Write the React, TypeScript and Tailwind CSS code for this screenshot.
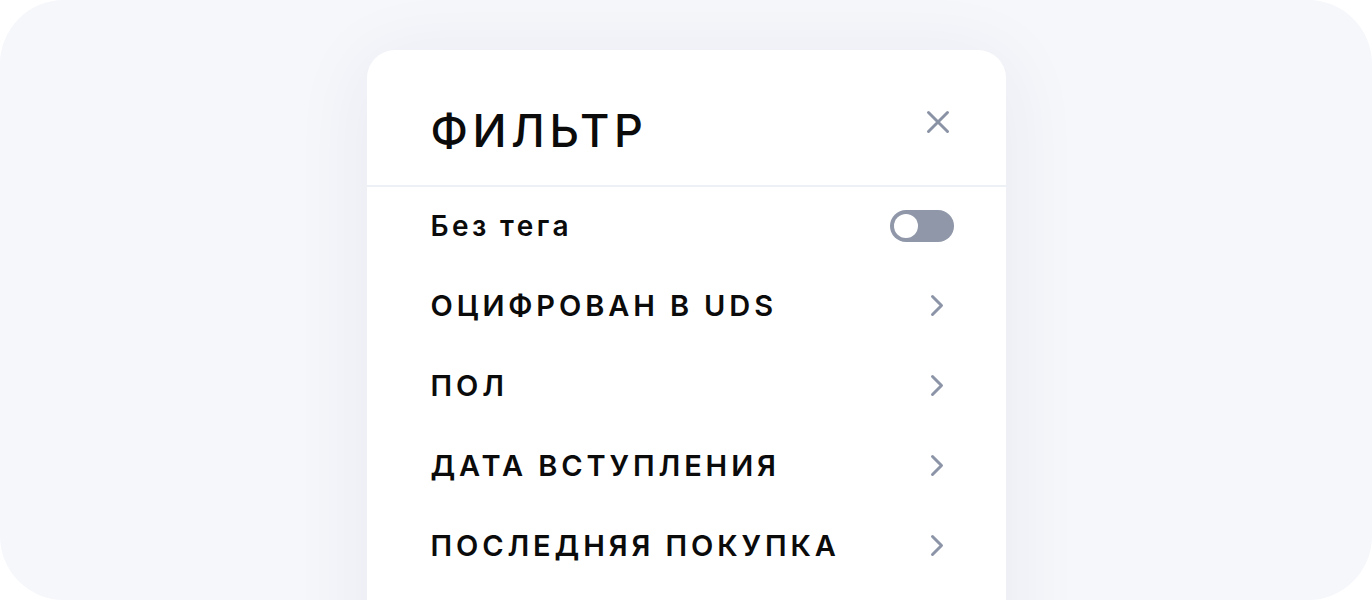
import { useState } from 'react'

const rows = ['ОЦИФРОВАН В UDS', 'ПОЛ', 'ДАТА ВСТУПЛЕНИЯ', 'ПОСЛЕДНЯЯ ПОКУПКА']

function Chevron() {
  return (
    <svg width="14" height="23" viewBox="0 0 14 23" fill="none" className="shrink-0">
      <path d="M2.5 2.5 L11.5 11.5 L2.5 20.5" stroke="#8c95a8" strokeWidth="3" strokeLinecap="round" strokeLinejoin="round" />
    </svg>
  )
}

export default function App() {
  const [noTag, setNoTag] = useState(false)

  return (
    <div className="bg-white font-['Inter','Noto_Sans',sans-serif]">
      <div className="flex h-[600px] w-full justify-center overflow-hidden rounded-[64px] bg-[#f6f7fb] pt-[50px]">
        <div className="h-[620px] w-[639px] shrink-0 rounded-t-[28px] bg-white shadow-[0_10px_80px_rgba(30,40,90,0.07)]">
          <div className="flex h-[137px] items-start justify-between border-b-2 border-[#edf0f4] pl-[64px] pr-[56px] pt-[58px]">
            <h2 className="text-[45px] font-medium leading-none tracking-[4.6px] text-[#0b0b0b]">ФИЛЬТР</h2>
            <button className="mt-[2px]" aria-label="Закрыть">
              <svg width="24" height="24" viewBox="0 0 24 24" fill="none">
                <path d="M2.5 2.5 L21.5 21.5 M21.5 2.5 L2.5 21.5" stroke="#8a93a6" strokeWidth="3" strokeLinecap="round" />
              </svg>
            </button>
          </div>

          <div className="flex h-[78px] items-center justify-between pl-[64px] pr-[52px]">
            <span className="text-[28px] font-semibold leading-none tracking-[3.4px] text-[#0b0b0b]">Без тега</span>
            <button
              onClick={() => setNoTag(!noTag)}
              className={noTag ? 'flex h-[32px] w-[64px] items-center justify-end rounded-full bg-[#5b6477] px-[4px]' : 'flex h-[32px] w-[64px] items-center rounded-full bg-[#8f97a9] px-[4px]'}
            >
              <span className="h-[24px] w-[24px] rounded-full bg-white" />
            </button>
          </div>

          {rows.map((r) => (
            <div key={r} className="flex h-[80px] items-center justify-between pl-[64px] pr-[62px]">
              <span className="text-[29px] font-semibold leading-none tracking-[3.9px] text-[#0b0b0b]">{r}</span>
              <Chevron />
            </div>
          ))}
        </div>
      </div>
    </div>
  )
}
